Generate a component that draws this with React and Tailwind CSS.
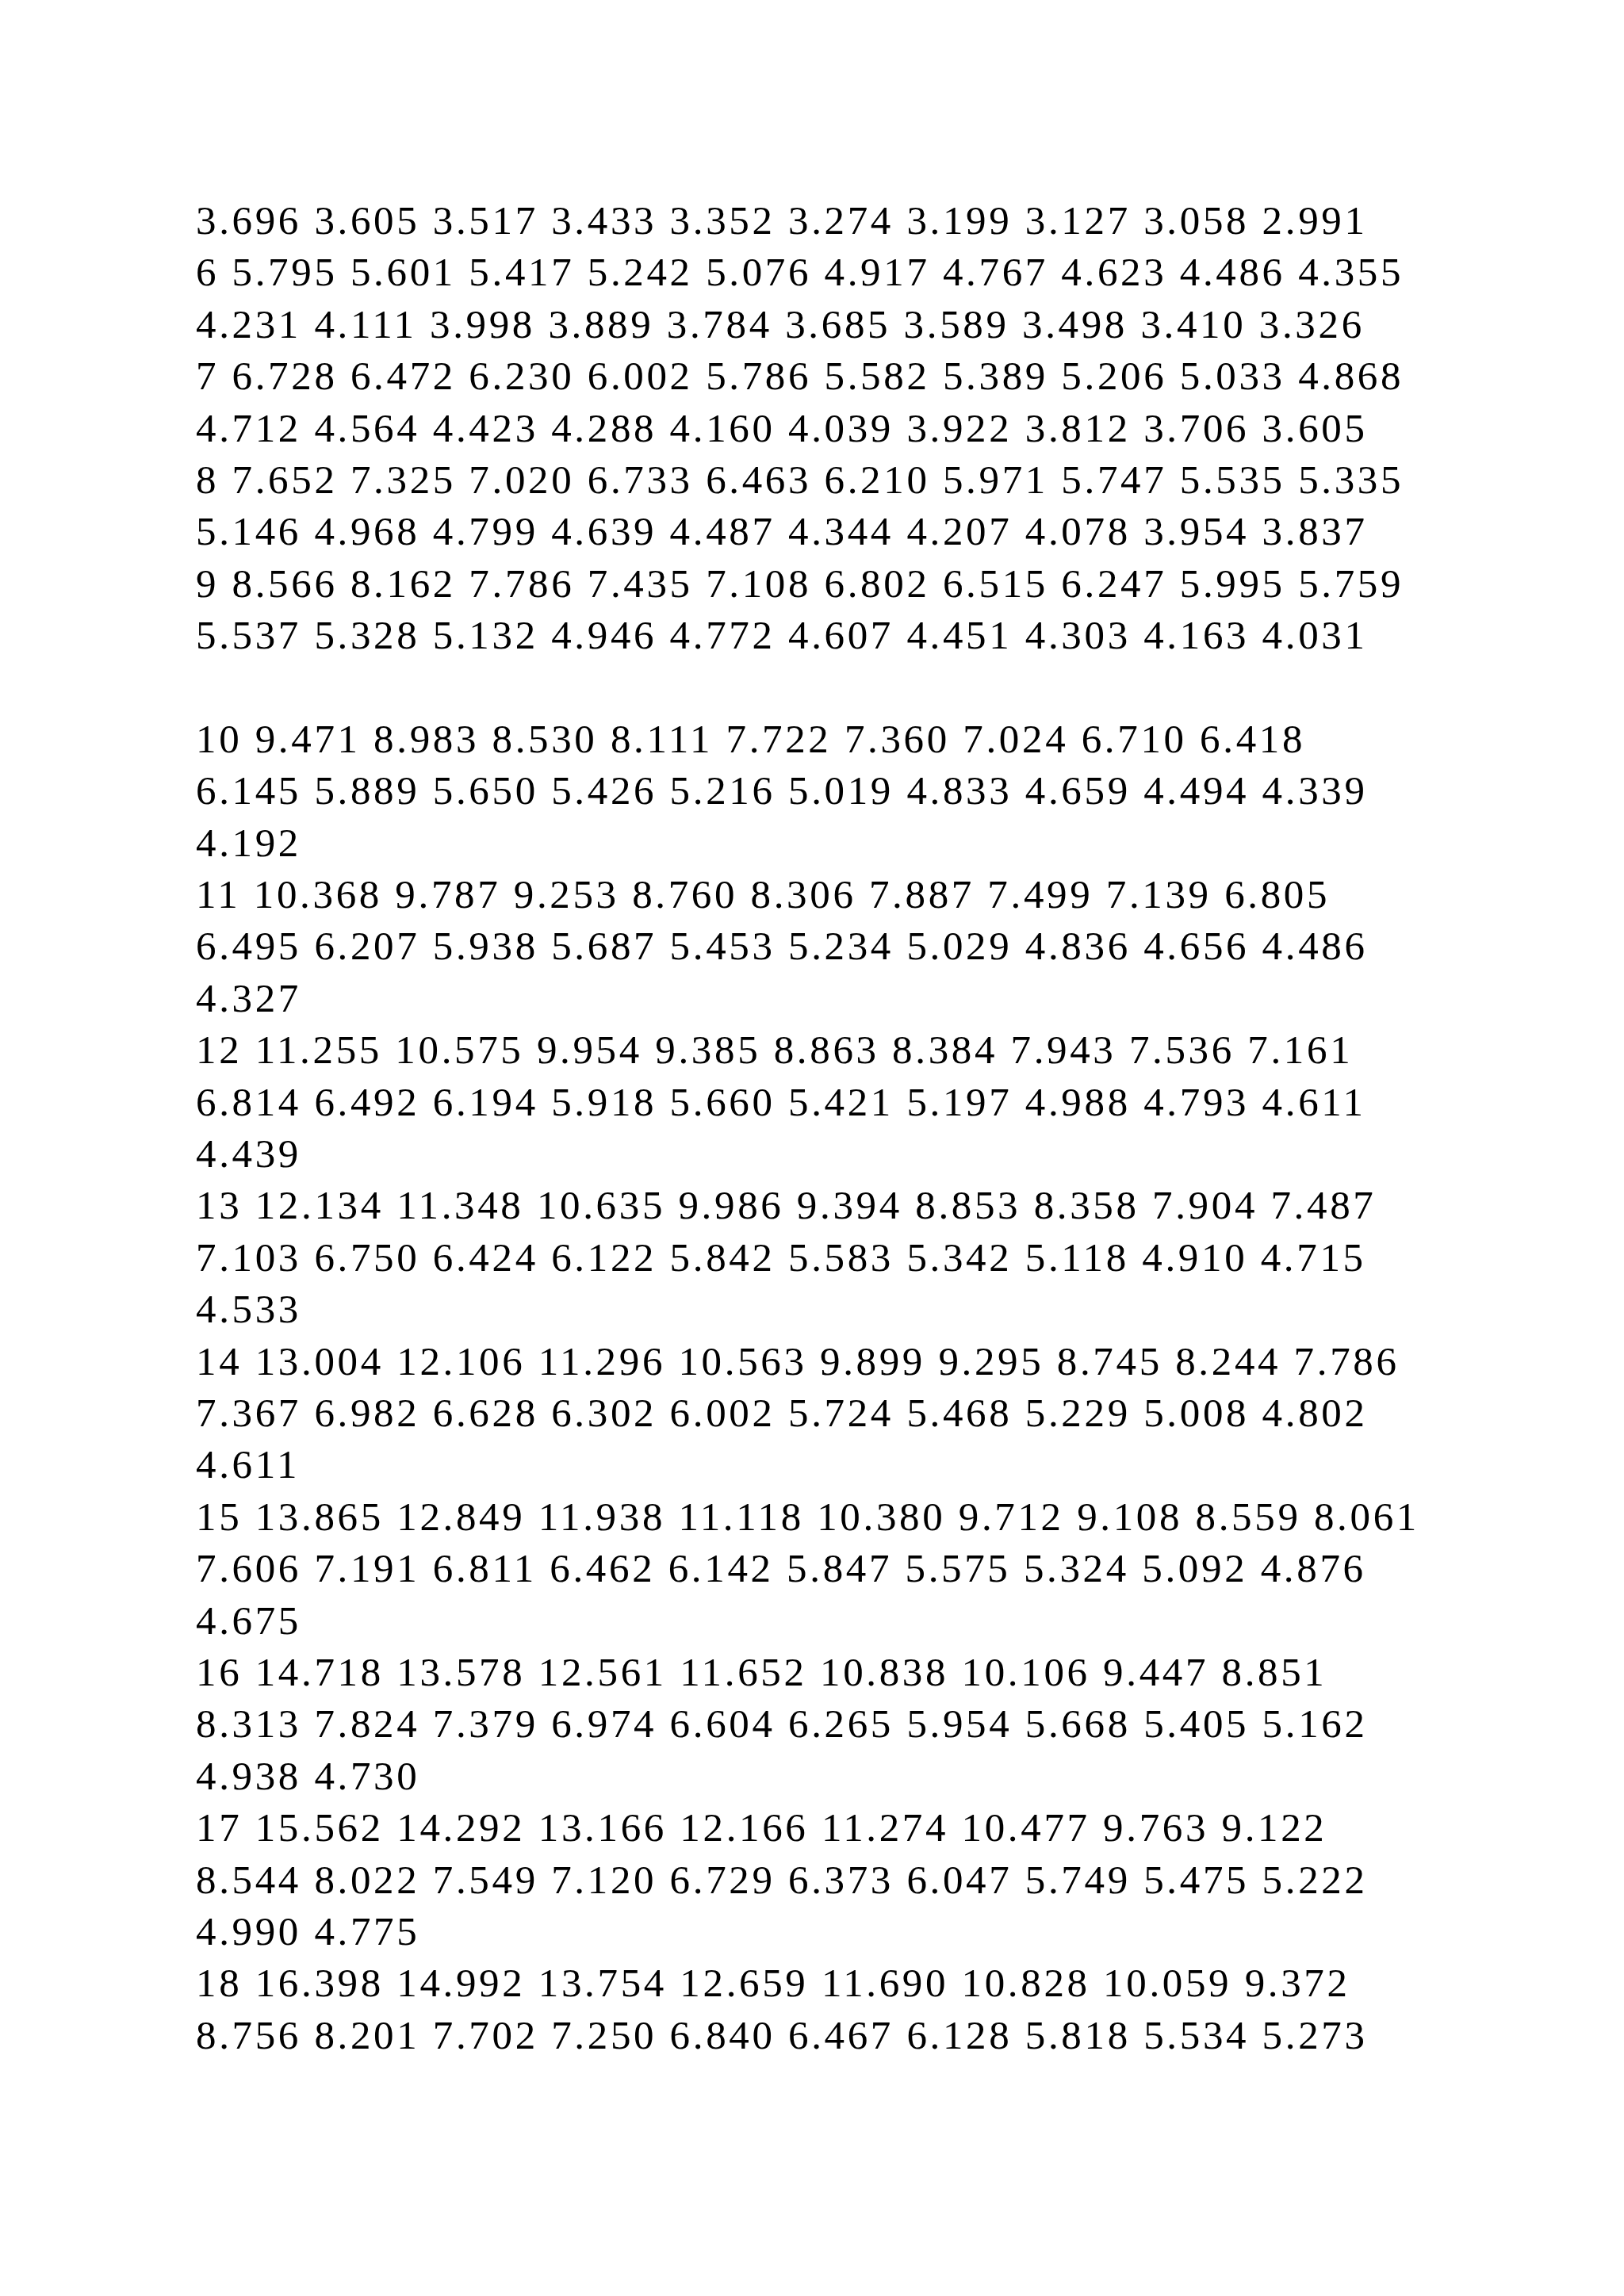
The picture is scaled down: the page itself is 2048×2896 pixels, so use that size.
const rows = [
  "3.696 3.605 3.517 3.433 3.352 3.274 3.199 3.127 3.058 2.991",
  "6 5.795 5.601 5.417 5.242 5.076 4.917 4.767 4.623 4.486 4.355",
  "4.231 4.111 3.998 3.889 3.784 3.685 3.589 3.498 3.410 3.326",
  "7 6.728 6.472 6.230 6.002 5.786 5.582 5.389 5.206 5.033 4.868",
  "4.712 4.564 4.423 4.288 4.160 4.039 3.922 3.812 3.706 3.605",
  "8 7.652 7.325 7.020 6.733 6.463 6.210 5.971 5.747 5.535 5.335",
  "5.146 4.968 4.799 4.639 4.487 4.344 4.207 4.078 3.954 3.837",
  "9 8.566 8.162 7.786 7.435 7.108 6.802 6.515 6.247 5.995 5.759",
  "5.537 5.328 5.132 4.946 4.772 4.607 4.451 4.303 4.163 4.031",
  "",
  "10 9.471 8.983 8.530 8.111 7.722 7.360 7.024 6.710 6.418",
  "6.145 5.889 5.650 5.426 5.216 5.019 4.833 4.659 4.494 4.339",
  "4.192",
  "11 10.368 9.787 9.253 8.760 8.306 7.887 7.499 7.139 6.805",
  "6.495 6.207 5.938 5.687 5.453 5.234 5.029 4.836 4.656 4.486",
  "4.327",
  "12 11.255 10.575 9.954 9.385 8.863 8.384 7.943 7.536 7.161",
  "6.814 6.492 6.194 5.918 5.660 5.421 5.197 4.988 4.793 4.611",
  "4.439",
  "13 12.134 11.348 10.635 9.986 9.394 8.853 8.358 7.904 7.487",
  "7.103 6.750 6.424 6.122 5.842 5.583 5.342 5.118 4.910 4.715",
  "4.533",
  "14 13.004 12.106 11.296 10.563 9.899 9.295 8.745 8.244 7.786",
  "7.367 6.982 6.628 6.302 6.002 5.724 5.468 5.229 5.008 4.802",
  "4.611",
  "15 13.865 12.849 11.938 11.118 10.380 9.712 9.108 8.559 8.061",
  "7.606 7.191 6.811 6.462 6.142 5.847 5.575 5.324 5.092 4.876",
  "4.675",
  "16 14.718 13.578 12.561 11.652 10.838 10.106 9.447 8.851",
  "8.313 7.824 7.379 6.974 6.604 6.265 5.954 5.668 5.405 5.162",
  "4.938 4.730",
  "17 15.562 14.292 13.166 12.166 11.274 10.477 9.763 9.122",
  "8.544 8.022 7.549 7.120 6.729 6.373 6.047 5.749 5.475 5.222",
  "4.990 4.775",
  "18 16.398 14.992 13.754 12.659 11.690 10.828 10.059 9.372",
  "8.756 8.201 7.702 7.250 6.840 6.467 6.128 5.818 5.534 5.273",
];

export default function App() {
  return (
    <div className="min-h-[2896px] bg-white pt-[246px] pl-[247px] text-black">
      {/* table rows as they sit on the page */}
      <div className="font-['Liberation_Serif','Times_New_Roman',serif] text-[51px] leading-[65.4px] tracking-[3.65px] whitespace-pre">
        {rows.map((row, i) => (
          <div key={i} className="h-[65.4px]">
            {row}
          </div>
        ))}
      </div>
    </div>
  );
}
